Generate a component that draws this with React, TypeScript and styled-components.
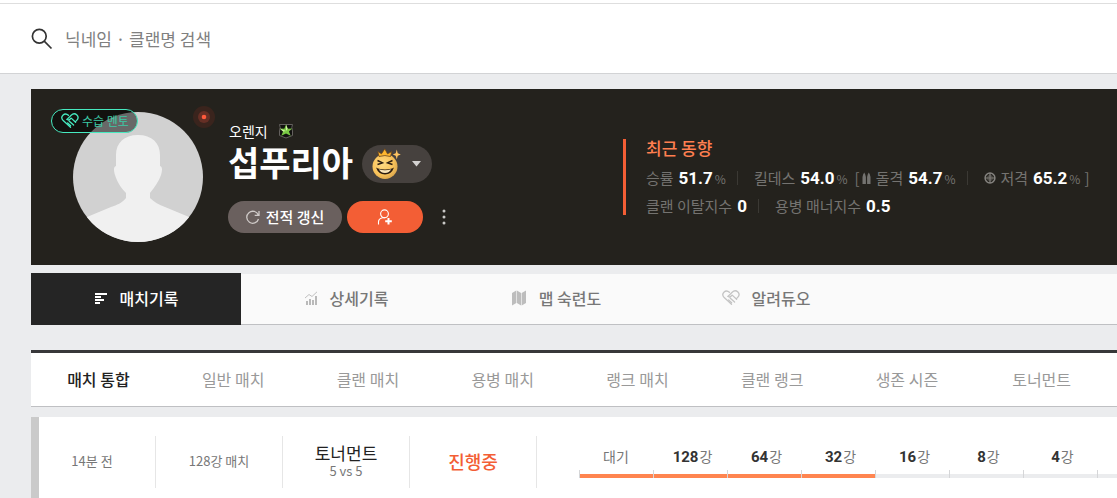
import React from 'react';
import styled, { createGlobalStyle } from 'styled-components';

const GlobalStyle = createGlobalStyle`
  *, *::before, *::after { box-sizing: border-box; }
  body {
    margin: 0;
    background: #ebecee;
    font-family: 'Noto Sans CJK KR', sans-serif;
    color: #222;
    overflow-x: hidden;
  }
  button, input { font-family: inherit; }
  a { text-decoration: none; color: inherit; }
  svg { display: block; flex: none; }
`;

const Header = styled.header`
  display: flex;
  align-items: center;
  gap: 12px;
  height: 71px;
  margin-top: 3px;
  padding: 0 31px;
  background: #fff;
  border-top: 1px solid #dedede;
  border-bottom: 1px solid #d2d3d5;
`;

const TopStrip = styled.div`
  display: flow-root;
  background: #fff;
`;

const SearchLabel = styled.label`
  display: block;
`;

const SearchInput = styled.input`
  flex: 1;
  min-width: 0;
  border: 0;
  outline: 0;
  padding: 0;
  background: transparent;
  font-size: 17px;
  font-weight: 400;
  line-height: 24px;
  color: #333;
  &::placeholder { color: #808080; opacity: 1; }
`;

const Main = styled.main`
  margin: 15px 0 0 31px;
`;

const Hero = styled.section`
  display: flex;
  height: 176px;
  padding-left: 42px;
  background: #24221d;
`;

const AvatarBox = styled.div`
  position: relative;
  flex: none;
  width: 130px;
  height: 130px;
  margin-top: 23px;
`;

const MentorBadge = styled.span`
  position: absolute;
  left: -22px;
  top: -3px;
  display: flex;
  align-items: center;
  gap: 3px;
  height: 24px;
  padding: 0 8px 0 9px;
  border: 1px solid #47eac0;
  border-radius: 12px;
  background: rgba(0, 0, 0, 0.5);
  color: #3cc9a5;
  font-size: 12px;
  font-weight: 400;
  line-height: 22px;
  white-space: nowrap;
`;

const StatusDot = styled.span`
  position: absolute;
  right: -12px;
  top: -6px;
`;

const Profile = styled.div`
  flex: none;
  width: 420px;
  padding: 34px 0 0 25px;
`;

const ClanLink = styled.a`
  display: flex;
  align-items: center;
  gap: 10px;
  height: 16px;
  padding-left: 1px;
  color: #fff;
  font-size: 14px;
  font-weight: 400;
`;

const NameRow = styled.div`
  display: flex;
  align-items: center;
  gap: 9px;
  height: 38px;
  margin-top: 6px;
`;

const Name = styled.h1`
  margin: 0;
  color: #fff;
  font-size: 34px;
  font-weight: 700;
  line-height: 34px;
  padding-bottom: 4px;
`;

const Actions = styled.div`
  display: flex;
  align-items: center;
  gap: 5px;
  margin-top: 18px;
`;

const Pill = styled.button<{ $bg: string; $w: number; $h: number }>`
  display: flex;
  align-items: center;
  justify-content: center;
  gap: 6px;
  width: ${p => p.$w}px;
  height: ${p => p.$h}px;
  padding: 0;
  border: 0;
  border-radius: 19px;
  background: ${p => p.$bg};
  color: #fff;
  font-size: 15px;
  font-weight: 500;
  line-height: 20px;
  cursor: pointer;
`;

const MoreButton = styled.button`
  display: flex;
  justify-content: center;
  width: 32px;
  padding: 8px 0;
  border: 0;
  background: none;
  cursor: pointer;
`;

const Trend = styled.div`
  align-self: flex-start;
  height: 76px;
  margin-top: 50px;
  padding-left: 20px;
  border-left: 3px solid #f35e35;
  white-space: nowrap;
`;

const TrendTitle = styled.h2`
  margin: 0 0 7px;
  color: #ff7f50;
  font-size: 17px;
  font-weight: 500;
  line-height: 18px;
`;

const StatRow = styled.div`
  display: flex;
  align-items: center;
  height: 28px;
  color: #747370;
  font-size: 15px;
  font-weight: 400;
  line-height: 28px;
`;

const Stat = styled.span`
  display: flex;
  align-items: center;
  gap: 5px;
`;

const Figure = styled.span`
  display: flex;
  align-items: baseline;
  gap: 2px;
  font-size: 12px;
`;

const Num = styled.b<{ $size: number; $color: string }>`
  font-family: Roboto, sans-serif;
  font-size: ${p => p.$size}px;
  font-weight: 700;
  color: ${p => p.$color};
`;

const StatRule = styled.i`
  width: 1px;
  height: 14px;
  margin: 0 16px 0 11px;
  background: #3b3934;
`;

const Bracket = styled.span<{ $open?: boolean }>`
  margin: ${p => (p.$open ? '0 2px 0 7px' : '0 0 0 4px')};
`;

const Tabs = styled.nav`
  display: flex;
  align-items: flex-end;
  height: 52px;
  margin-top: 8px;
  background: linear-gradient(#ebecee 1px, #fafafa 1px);
  border-bottom: 1px solid #bfc0c3;
`;

const Tab = styled.a<{ $active?: boolean }>`
  display: flex;
  align-items: center;
  justify-content: center;
  gap: 12px;
  flex: 0 0 210px;
  height: 52px;
  margin-bottom: -1px;
  padding-bottom: 2px;
  background: ${p => (p.$active ? '#252525' : 'transparent')};
  color: ${p => (p.$active ? '#fff' : '#777')};
  font-size: 16px;
  font-weight: 500;
  line-height: 22px;
`;

const Filters = styled.nav`
  display: flex;
  height: 57px;
  margin-top: 25px;
  padding-right: 8px;
  background: #fff;
  border-top: 3px solid #38383a;
  border-bottom: 1px solid #bfc0c3;
`;

const Filter = styled.a<{ $active?: boolean }>`
  flex: 1;
  text-align: center;
  color: ${p => (p.$active ? '#222' : '#999')};
  font-size: 16px;
  font-weight: ${p => (p.$active ? 500 : 400)};
  line-height: 53px;
  white-space: nowrap;
`;

const MatchRow = styled.article`
  display: flex;
  margin-top: 10px;
  padding: 19px 0 18px;
  background: #fff;
  border-left: 8px solid #cacaca;
`;

const Cell = styled.div<{ $first?: boolean }>`
  display: flex;
  flex-direction: column;
  align-items: center;
  justify-content: center;
  flex: none;
  width: ${p => (p.$first ? 117 : 127)}px;
  height: 52px;
  padding: 0 ${p => (p.$first ? 10 : 0)}px 2px 0;
  border-right: 1px solid #e6e6e6;
  color: #777;
  font-size: 13px;
  font-weight: 400;
  line-height: 16px;
`;

const Mode = styled.strong`
  color: #222;
  font-size: 17px;
  font-weight: 400;
  line-height: 20px;
`;

const Live = styled.strong`
  color: #f35e35;
  font-size: 18px;
  font-weight: 500;
  line-height: 24px;
`;

const Rounds = styled.ol`
  display: flex;
  flex: 1;
  min-width: 0;
  margin: 0 0 0 42px;
  padding: 9px 0 0;
  list-style: none;
`;

const Round = styled.li<{ $done: boolean; $rest?: boolean; $numbered?: boolean }>`
  display: flex;
  justify-content: center;
  align-items: baseline;
  gap: 1px;
  flex: ${p => (p.$rest ? '1 0 0' : '0 0 74px')};
  height: 33px;
  padding-left: ${p => (p.$numbered ? 5 : 0)}px;
  color: #777;
  font-size: 14px;
  font-weight: 400;
  line-height: 22px;
  background:
    linear-gradient(#d5d6d8, #d5d6d8) left bottom / 1px 8px no-repeat,
    linear-gradient(${p => (p.$done ? '#ff8550, #ff8550' : '#ebecee, #ebecee')}) left bottom / 100% 4px no-repeat;
`;

const HeartHands = ({ color }: { color: string }) => (
  <svg width="18" height="16" viewBox="0 0 18 16" fill="none" stroke={color} strokeWidth="1.3" strokeLinecap="round" strokeLinejoin="round">
    <path d="M9.500 14.200L2.200 7.600C.6 5.900.5 3.600 1.900 2.200 3.500.7 5.800.8 7.400 2.300" />
    <path d="M6 6.400L10.200 2.200C12 .5 14.300.6 15.900 2 17.400 3.600 17.300 5.800 15.700 7.400L14.500 8.600" />
    <path d="M6 6.400C7 7.400 8.200 7.100 9.200 6L10.200 5.100 14.600 9.300M8.300 8.200L12.600 12.100M6.600 9.900L9.600 12.700" />
  </svg>
);

const SearchIcon = () => (
  <svg width="22" height="22" viewBox="0 0 22 22" fill="none" stroke="#333" strokeWidth="1.700">
    <circle cx="8.300" cy="8.300" r="6.900" />
    <path d="M13.200 13.200L20.500 20.500" />
  </svg>
);

const AvatarArt = () => (
  <svg width="130" height="130" viewBox="0 0 130 130" role="img" aria-label="프로필">
    <defs>
      <clipPath id="avatar-round"><circle cx="65" cy="65" r="65" /></clipPath>
    </defs>
    <g clipPath="url(#avatar-round)">
      <rect width="130" height="130" fill="#d1d1d1" />
      <path fill="#f0f0f0" d="M65 23C51 23 43 31 43 43V54C40 55 41 59 42 63C44 70 49 77 53 81V86C49 91 44 93 38 95L14 105V131H116V105L92 95C86 93 81 90 77 86V81C81 76 86 69 88 63C89 59 90 55 87 54V43C87 31 79 23 65 23Z" />
    </g>
  </svg>
);

const DotArt = () => (
  <svg width="22" height="22" viewBox="0 0 22 22">
    <circle cx="11" cy="11" r="11" fill="#3a241d" />
    <circle cx="11" cy="11" r="6" fill="#652f25" />
    <circle cx="11" cy="11" r="2.300" fill="#ff5a3c" />
  </svg>
);

const ClanMark = () => (
  <svg width="16" height="16" viewBox="0 0 16 16">
    <path d="M1.500 1.500H14.500L13.800 4.500 14.500 8V12.500L8 15 1.500 12.500V8L2.200 4.500Z" fill="#11110f" stroke="#65615f" />
    <path d="M8 1.500L9.700 5.700 14.200 5.500 10.900 8.400 12.700 12.800 8 10.500 3.300 12.800 5.100 8.400 1.800 5.500 6.300 5.700Z" fill="#79c943" />
    <path d="M8 1.500L9.700 5.700 8 8ZM1.800 5.500L8 8 5.100 8.400Z" fill="#d2f5a2" />
  </svg>
);

const Emoji = () => (
  <svg width="30" height="32" viewBox="0 0 30 32">
    <defs>
      <radialGradient id="face" cx=".4" cy=".4" r=".65">
        <stop offset="0" stopColor="#ffda83" />
        <stop offset=".65" stopColor="#f9c35b" />
        <stop offset="1" stopColor="#d9a54c" />
      </radialGradient>
    </defs>
    <circle cx="14" cy="18.500" r="12.500" fill="url(#face)" />
    <path d="M8 8.500L6.800 3.600 10.500 5.800 13.800 .8 16.500 5.800 20.800 3.600 19.500 8.500Q14 6.600 8 8.500Z" fill="#ffb62e" stroke="#67431c" strokeWidth=".8" />
    <path d="M25.800 1.500L26.700 5.300 29.800 6.500 26.700 7.700 25.800 11.500 24.700 7.700 21.800 6.500 24.700 5.300Z" fill="#ffc562" />
    <path d="M6.500 12.500L11.500 14.800 6.500 16.500M21.500 12.500L16.500 14.800 21.500 16.500" fill="none" stroke="#2b1c10" strokeWidth="1.400" />
    <path d="M5 19.500L7 20.500Q14 22.500 21 20.500L23 19.500Q20.500 26.500 14 26.500Q7.500 26.500 5 19.500Z" fill="#2b1c10" />
    <path d="M7.800 21.300Q14 23 20.200 21.300Q18.500 25 14 25Q9.500 25 7.800 21.300Z" fill="#f7e3b8" />
  </svg>
);

const RefreshIcon = () => (
  <svg width="14" height="14" viewBox="0 0 14 14" fill="none" stroke="#cfcac8" strokeWidth="1.300">
    <path d="M12.300 5A6 6 0 1 0 12.500 9M13 1V5.300H8.700" />
  </svg>
);

const AddUserIcon = () => (
  <svg width="16" height="16" viewBox="0 0 16 16" fill="none" stroke="#fff">
    <circle cx="7.500" cy="4.800" r="3.900" strokeWidth="1.100" />
    <path d="M1.500 15.500V13C1.500 10.500 3 9.200 5.500 8.700H8" strokeWidth="1.100" />
    <path d="M11.500 9V15.500M8.200 12.200H14.800" strokeWidth="2" />
  </svg>
);

const Bullets = () => (
  <svg width="9" height="12" viewBox="0 0 9 12" fill="#747370">
    <path d="M.5 5Q.9 2 2.200 .5 3.500 2 3.900 5V12H.5ZM5.100 5Q5.500 2 6.800 .5 8.100 2 8.500 5V12H5.100Z" />
  </svg>
);

const Scope = () => (
  <svg width="12" height="12" viewBox="0 0 12 12" fill="none" stroke="#85837f">
    <circle cx="6" cy="6" r="4.900" strokeWidth="1.500" />
    <path d="M6 1V11M1 6H11" strokeWidth="1.200" />
    <rect x="4" y="4" width="4" height="4" strokeWidth=".5" />
  </svg>
);

const BarsIcon = () => (
  <svg width="14" height="14" viewBox="0 0 14 14" fill="#fff">
    <path d="M1 2H13V4H1ZM1 5H7V7H1ZM1 8H10V10H1ZM1 11H6V13H1Z" />
  </svg>
);

const ChartIcon = () => (
  <svg width="14" height="14" viewBox="0 0 14 14">
    <path d="M2 10H4V14H2ZM5 8H7V14H5ZM8 9H10V14H8ZM11 5H13V14H11Z" fill="#b9b9b9" />
    <path d="M1 7L5 3.500 8 5.500 13 .8" fill="none" stroke="#c0c0c0" />
  </svg>
);

const MapIcon = () => (
  <svg width="16" height="16" viewBox="0 0 16 16" fill="#bdbdbd">
    <path d="M1 3L5.300 .5V13L1 15.500ZM5.900 .5L10.100 3V15.500L5.900 13ZM10.700 3L15 .5V13L10.700 15.500Z" />
  </svg>
);

const tabs = [
  { label: '매치기록', icon: <BarsIcon />, active: true },
  { label: '상세기록', icon: <ChartIcon /> },
  { label: '맵 숙련도', icon: <MapIcon /> },
  { label: '알려듀오', icon: <HeartHands color="#c4c4c4" /> },
];

const filters = ['매치 통합', '일반 매치', '클랜 매치', '용병 매치', '랭크 매치', '클랜 랭크', '생존 시즌', '토너먼트'];
const rounds = ['128', '64', '32', '16', '8', '4'];

const StatItem = ({ label, value, percent, icon }: { label: string; value: string; percent?: boolean; icon?: React.ReactNode }) => (
  <Stat>
    {icon}
    {label}
    <Figure>
      <Num $size={17} $color="#fff">{value}</Num>
      {percent && '%'}
    </Figure>
  </Stat>
);

export default function App() {
  return (
    <>
      <GlobalStyle />
      <TopStrip>
        <Header>
          <SearchLabel htmlFor="search" aria-label="검색"><SearchIcon /></SearchLabel>
          <SearchInput id="search" type="text" placeholder="닉네임 · 클랜명 검색" />
        </Header>
      </TopStrip>
      <Main>
        <Hero>
          <AvatarBox>
            <AvatarArt />
            <MentorBadge><HeartHands color="#47eac0" />수습 멘토</MentorBadge>
            <StatusDot><DotArt /></StatusDot>
          </AvatarBox>
          <Profile>
            <ClanLink href="#clan">오렌지<ClanMark /></ClanLink>
            <NameRow>
              <Name>섭푸리아</Name>
              <Pill type="button" aria-label="이모지 선택" $bg="#46413e" $w={70} $h={38}>
                <Emoji />
                <svg width="16" height="6" viewBox="0 0 16 6" fill="#d4d2d1"><path d="M5 0H14L9.500 5.500Z" /></svg>
              </Pill>
            </NameRow>
            <Actions>
              <Pill type="button" $bg="#6a605e" $w={114} $h={32}><RefreshIcon />전적 갱신</Pill>
              <Pill type="button" aria-label="친구 추가" $bg="#f35e35" $w={76} $h={32}><AddUserIcon /></Pill>
              <MoreButton type="button" aria-label="더보기">
                <svg width="4" height="16" viewBox="0 0 4 16" fill="#c9c8c6">
                  <circle cx="2" cy="2" r="1.500" /><circle cx="2" cy="8" r="1.500" /><circle cx="2" cy="14" r="1.500" />
                </svg>
              </MoreButton>
            </Actions>
          </Profile>
          <Trend>
            <TrendTitle>최근 동향</TrendTitle>
            <StatRow>
              <StatItem label="승률" value="51.7" percent />
              <StatRule />
              <StatItem label="킬데스" value="54.0" percent />
              <Bracket $open>[</Bracket>
              <StatItem label="돌격" value="54.7" percent icon={<Bullets />} />
              <StatRule />
              <StatItem label="저격" value="65.2" percent icon={<Scope />} />
              <Bracket>]</Bracket>
            </StatRow>
            <StatRow>
              <StatItem label="클랜 이탈지수" value="0" />
              <StatRule />
              <StatItem label="용병 매너지수" value="0.5" />
            </StatRow>
          </Trend>
        </Hero>
        <Tabs>
          {tabs.map(t => (
            <Tab key={t.label} href="#tab" $active={t.active}>{t.icon}{t.label}</Tab>
          ))}
        </Tabs>
        <Filters>
          {filters.map((f, i) => (
            <Filter key={f} href="#filter" $active={i === 0}>{f}</Filter>
          ))}
        </Filters>
        <MatchRow>
          <Cell $first>14분 전</Cell>
          <Cell>128강 매치</Cell>
          <Cell><Mode>토너먼트</Mode>5 vs 5</Cell>
          <Cell><Live>진행중</Live></Cell>
          <Rounds>
            <Round $done>대기</Round>
            {rounds.map((r, i) => (
              <Round key={r} $done={i < 3} $numbered><Num $size={15} $color="#333">{r}</Num>강</Round>
            ))}
            <Round $done={false} $rest />
          </Rounds>
        </MatchRow>
      </Main>
    </>
  );
}
